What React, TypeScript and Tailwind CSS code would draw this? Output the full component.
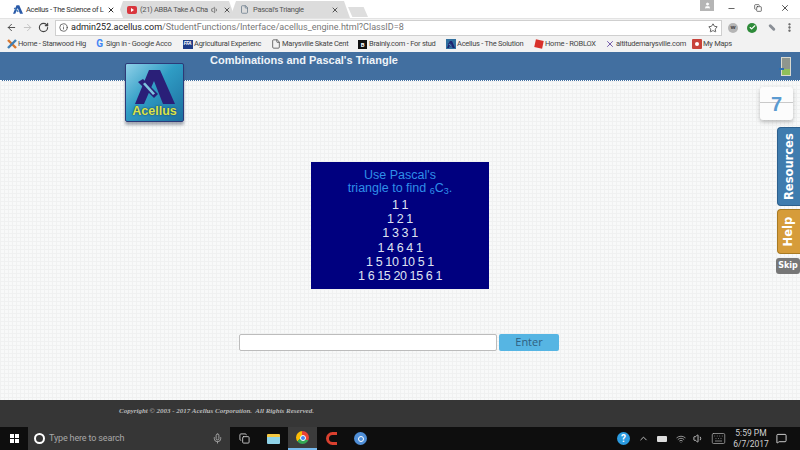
import {
  ArrowLeft,
  ArrowRight,
  RotateCw,
  Info,
  Star,
  X,
  Minus,
  Copy,
  MoreVertical,
  Check,
  Mic,
  ChevronUp,
  Wifi,
  Volume1,
  Keyboard,
  MessageSquare,
  File,
  User,
} from "lucide-react";

const chromeFont = "font-['Roboto','Noto_Sans',sans-serif]";

function AcellusMark({ className }: { className: string }) {
  return (
    <svg viewBox="0 0 40 34" className={className} fill="currentColor">
      <path d="M14 0h11l15 34H28L19 11 9 34H0z" />
      <path d="M3 12l5-3 15 15-4 4z" />
      <path d="M8 14l2-1.5 10 11-2 1.5z" fill="#7fc4de" />
    </svg>
  );
}

function Tab({
  className,
  active,
  children,
}: {
  className: string;
  active?: boolean;
  children: React.ReactNode;
}) {
  return (
    <div
      className={`flex h-[17px] items-center gap-[3px] pl-[10px] pr-[8px] text-[7.5px] tracking-[-0.3px] [clip-path:polygon(0_100%,6px_0,calc(100%-6px)_0,100%_100%)] ${
        active ? "z-10 bg-white text-[#333]" : "bg-[#dcdcdc] text-[#555]"
      } ${className}`}
    >
      {children}
    </div>
  );
}

function TabStrip() {
  return (
    <div className={`flex h-[18px] items-end bg-white pl-[3px] ${chromeFont}`}>
      <Tab active className="w-[120px]">
        <AcellusMark className="h-[9px] w-[10px] shrink-0 text-[#2a5aa8]" />
        <span className="flex-1 whitespace-nowrap">Acellus - The Science of L</span>
        <X size={8} strokeWidth={3} className="shrink-0 text-[#333]" />
      </Tab>
      <Tab className="-ml-[6px] w-[118px]">
        <div className="flex h-[8px] w-[10px] shrink-0 items-center justify-center rounded-[2px] bg-[#d9363e]">
          <div className="h-0 w-0 border-y-[2px] border-l-[3px] border-y-transparent border-l-white" />
        </div>
        <span className="flex-1 whitespace-nowrap">(21) ABBA Take A Cha</span>
        <Volume1 size={8} className="shrink-0" />
        <X size={8} strokeWidth={3} className="ml-[1px] shrink-0" />
      </Tab>
      <Tab className="-ml-[5px] w-[120px]">
        <File size={9} className="shrink-0 text-[#66788a]" />
        <span className="ml-[1px] flex-1 whitespace-nowrap">Pascal's Triangle</span>
        <X size={8} strokeWidth={3} className="mr-[3px] shrink-0" />
      </Tab>
      <div className="mb-[1px] ml-[-2px] h-[10px] w-[20px] bg-[#dedede] [clip-path:polygon(0_0,78%_0,100%_100%,22%_100%)]" />
      <div className="flex-1" />
      <div className="mr-[11px] flex h-[11px] w-[14px] items-center justify-center self-start bg-[#b5b5b5]">
        <User size={7} className="fill-white text-white" />
      </div>
      <div className="flex h-full w-[75px] items-center justify-between pb-[2px] pl-[2px] pr-[10px] text-[#333]">
        <Minus size={9} />
        <Copy size={8} />
        <X size={10} />
      </div>
    </div>
  );
}

function Toolbar() {
  return (
    <div className="flex h-[18px] items-center border-t border-[#e3e3e3] bg-[#f2f2f2] pl-[6px]">
      <ArrowLeft size={11} className="shrink-0 text-[#444]" />
      <ArrowRight size={11} className="ml-[5px] shrink-0 text-[#c0c0c0]" />
      <RotateCw size={11} strokeWidth={2.5} className="ml-[5px] shrink-0 text-[#444]" />
      <div className={`ml-[6px] flex h-[16px] w-[667px] shrink-0 items-center border border-[#cfcfcf] bg-white pl-[3px] pr-[3px] text-[9px] ${chromeFont}`}>
        <Info size={9} className="text-[#444]" />
        <span className="ml-[3px] text-[#222]">admin252.acellus.com</span>
        <span className="text-[#777]">/StudentFunctions/Interface/acellus_engine.html?ClassID=8</span>
        <Star size={10} className="ml-auto text-[#444]" />
      </div>
      <div className="ml-[6px] flex h-[10px] w-[10px] shrink-0 items-center justify-center rounded-full bg-[#b5b5b5] text-[6px] font-bold text-[#444]">
        w
      </div>
      <div className="ml-[9px] flex h-[10px] w-[10px] shrink-0 items-center justify-center rounded-full bg-[#2e8b3a]">
        <Check size={7} strokeWidth={4} className="text-white" />
      </div>
      <div className="ml-[11px] h-[3px] w-[8px] shrink-0 rotate-45 rounded-full bg-[#8a8f96]" />
      <MoreVertical size={11} strokeWidth={3} className="ml-[8px] shrink-0 text-[#555]" />
    </div>
  );
}

const bookmarks = [
  {
    label: "Home - Stanwood Hig",
    box: "w-[88px]",
    icon: (
      <svg viewBox="0 0 10 10" className="h-[10px] w-[10px]">
        <path d="M1 1l8 8" stroke="#d9772e" strokeWidth="2.4" />
        <path d="M9 1L1 9" stroke="#3f7fb5" strokeWidth="2.4" />
      </svg>
    ),
  },
  { label: "Sign in - Google Acco", box: "w-[88px]", icon: <span className="text-[10px] font-bold leading-none text-[#4285f4]">G</span> },
  { label: "Agricultural Experienc", box: "w-[88px]", icon: <div className="flex h-[9px] w-[10px] items-center justify-center bg-[#1f3c88] text-[5px] font-bold italic text-white">FFA</div> },
  { label: "Marysville Skate Cent", box: "w-[87px]", icon: <File size={10} className="text-[#555]" /> },
  { label: "Brainly.com - For stud", box: "w-[88px]", icon: <div className="flex h-[9px] w-[9px] items-center justify-center bg-[#111] text-[6px] font-bold text-white">B</div> },
  { label: "Acellus - The Solution", box: "w-[88px]", icon: <div className="flex h-[10px] w-[10px] items-center justify-center bg-[#2f6f9f]"><AcellusMark className="h-[7px] w-[8px] text-[#1d2570]" /></div> },
  { label: "Home - ROBLOX", box: "w-[71px]", icon: <div className="h-[8px] w-[8px] rotate-12 bg-[#d8302a]" /> },
  { label: "altitudemarysville.com", box: "w-[87px]", icon: <X size={10} className="text-[#5b3f9e]" /> },
  { label: "My Maps", box: "w-[60px]", icon: <div className="flex h-[10px] w-[10px] items-center justify-center rounded-[1px] bg-[#c8423a]"><div className="h-[4px] w-[4px] rounded-full bg-white" /></div> },
];

function Bookmarks() {
  return (
    <div className={`flex h-[16px] items-center bg-[#f2f2f2] pl-[6px] text-[7.5px] tracking-[-0.25px] text-[#444] ${chromeFont}`}>
      {bookmarks.map((b) => (
        <div key={b.label} className={`flex shrink-0 items-center gap-[1px] ${b.box}`}>
          <div className="flex w-[11px] shrink-0 items-center justify-center">{b.icon}</div>
          <span className="flex-1 whitespace-nowrap">{b.label}</span>
        </div>
      ))}
    </div>
  );
}

function PageHeader() {
  return (
    <div className="relative h-[29px] border-b border-dotted border-white bg-[#426fa0] pl-[210px]">
      <h1 className="mt-[1px] font-['Liberation_Sans',sans-serif] text-[11px] font-bold leading-[14px] text-[#eef3f8]">
        Combinations and Pascal's Triangle
      </h1>
      <div className="absolute right-[9px] top-[5px] flex h-[19px] w-[10px] flex-col justify-end border border-[#d9d9cf] bg-[#8f968e]">
        <div className="h-[6px] bg-[#8fc05a]" />
        <div className="absolute -left-[3px] top-[10px] h-[2px] w-[5px] bg-[#2f6fb0]" />
      </div>
    </div>
  );
}

function Logo() {
  return (
    <div className="absolute left-[125px] top-[63px] flex h-[59px] w-[59px] flex-col items-center justify-between rounded-[2px] border border-[#2c3a78] bg-[linear-gradient(135deg,#8ed0e8,#2f9cc4_45%,#1d6f9f)] pb-[3px] pt-[6px] shadow-[0_3px_3px_rgba(60,70,90,0.45)]">
      <AcellusMark className="h-[34px] w-[40px] text-[#2a1f78]" />
      <span className="font-['Liberation_Sans',sans-serif] text-[12.5px] font-bold leading-[13px] text-[#d9e54a] [text-shadow:0_0_2px_#1d2a55]">
        Acellus
      </span>
    </div>
  );
}

function SideTabs() {
  return (
    <>
      <div className="absolute left-[760px] top-[87px] flex h-[33px] w-[33px] items-center justify-center rounded-[3px] bg-[#fcfcfc] shadow-[0_2px_4px_rgba(0,0,0,0.25)]">
        <div className="absolute inset-x-0 top-[15px] h-px bg-[#c9c9c9]" />
        <span className="relative font-['Liberation_Sans',sans-serif] text-[20px] font-bold leading-none text-[#5b9bd1]">7</span>
      </div>
      <div className="absolute left-[777px] top-[127px] flex h-[79px] w-[23px] items-center justify-center rounded-l-[4px] border border-r-0 border-[#2c5f8d] bg-[#3f7cae]">
        <span className="-rotate-90 whitespace-nowrap font-['DejaVu_Sans',sans-serif] text-[11.5px] font-bold text-white">Resources</span>
      </div>
      <div className="absolute left-[777px] top-[209px] flex h-[45px] w-[23px] items-center justify-center rounded-l-[4px] border border-r-0 border-[#a87a22] bg-[#d69c3a]">
        <span className="-rotate-90 whitespace-nowrap font-['DejaVu_Sans',sans-serif] text-[11.5px] font-bold text-white">Help</span>
      </div>
      <div className="absolute left-[776px] top-[258px] flex h-[16px] w-[24px] items-center justify-center rounded-[3px] bg-[#777]">
        <span className="font-['DejaVu_Sans',sans-serif] text-[8px] font-bold text-white">Skip</span>
      </div>
    </>
  );
}

function Question() {
  const rows = ["1 1", "1 2 1", "1 3 3 1", "1 4 6 4 1", "1 5 10 10 5 1", "1 6 15 20 15 6 1"];
  return (
    <div className="flex h-[127px] w-[178px] flex-col items-center bg-[#00007f] pt-[7px] font-['Liberation_Sans',sans-serif]">
      <div className="text-center text-[12.5px] leading-[13px] text-[#2f8fe8]">
        <div>Use Pascal's</div>
        <div>
          triangle to find <sub className="text-[9px]">6</sub>C<sub className="text-[9px]">3</sub>.
        </div>
      </div>
      <div className="mt-[3px] text-center text-[12.5px] leading-[14.2px] tracking-[-0.4px] text-[#dfe3f2]">
        {rows.map((row) => (
          <div key={row}>{row}</div>
        ))}
      </div>
    </div>
  );
}

function TaskIcon({ active, children }: { active?: boolean; children: React.ReactNode }) {
  return (
    <div className={`flex h-full w-[29px] shrink-0 items-center justify-center ${active ? "border-b-2 border-[#76b9ed] bg-[#3c3c3c]" : ""}`}>
      {children}
    </div>
  );
}

function Taskbar() {
  return (
    <div className={`flex h-[23px] items-center bg-[#0e0e0e] text-[#ddd] ${chromeFont}`}>
      <div className="flex h-full w-[28px] shrink-0 items-center justify-center">
        <div className="grid grid-cols-2 gap-[1px]">
          <div className="h-[4px] w-[4px] bg-white" />
          <div className="h-[4px] w-[4px] bg-white" />
          <div className="h-[4px] w-[4px] bg-white" />
          <div className="h-[4px] w-[4px] bg-white" />
        </div>
      </div>
      <div className="flex h-full w-[202px] shrink-0 items-center bg-[#363636] pl-[6px] pr-[7px] text-[9px] tracking-[-0.15px] text-[#a8a8a8]">
        <div className="h-[11px] w-[11px] rounded-full border-2 border-white" />
        <span className="ml-[4px]">Type here to search</span>
        <Mic size={11} className="ml-auto text-[#aaa]" />
      </div>
      <div className="flex h-full items-center">
        <TaskIcon>
          <Copy size={11} className="text-[#ccc]" />
        </TaskIcon>
        <TaskIcon>
          <div className="h-[10px] w-[13px] rounded-[1px] border-t-[3px] border-[#f5c842] bg-[#8fd3e8]" />
        </TaskIcon>
        <TaskIcon active>
          <div className="flex h-[13px] w-[13px] items-center justify-center rounded-full bg-[conic-gradient(#ea4335_0_33%,#34a853_33%_66%,#fbbc05_66%)]">
            <div className="h-[6px] w-[6px] rounded-full border border-white bg-[#4285f4]" />
          </div>
        </TaskIcon>
        <TaskIcon>
          <div className="h-[13px] w-[11px] rounded-l-full border-[3px] border-r-0 border-[#d9402f]" />
        </TaskIcon>
        <TaskIcon>
          <div className="flex h-[13px] w-[13px] items-center justify-center rounded-full bg-[#4f8fd8]">
            <div className="h-[6px] w-[6px] rounded-full border border-white" />
          </div>
        </TaskIcon>
      </div>
      <div className="ml-auto flex h-full items-center">
        <div className="flex h-[13px] w-[13px] items-center justify-center rounded-full bg-[#2b9be0] text-[10px] font-bold text-white">?</div>
        <ChevronUp size={11} className="ml-[8px] text-[#ccc]" />
        <div className="ml-[8px] h-[6px] w-[10px] rounded-[1px] bg-[#ddd]" />
        <Wifi size={10} className="ml-[9px] text-[#aaa]" />
        <Volume1 size={11} className="ml-[7px] text-[#ccc]" />
        <Keyboard size={15} strokeWidth={1.2} className="ml-[7px] text-[#aaa]" />
        <div className="ml-[7px] w-[36px] text-center text-[8.5px] leading-[11px] text-[#d0d0d0]">
          <div>5:59 PM</div>
          <div>6/7/2017</div>
        </div>
        <MessageSquare size={11} className="ml-[7px] mr-[13px] text-[#ddd]" />
      </div>
    </div>
  );
}

export default function App() {
  return (
    <div className="relative flex h-[450px] w-[800px] flex-col overflow-hidden bg-white">
      <TabStrip />
      <Toolbar />
      <Bookmarks />
      <PageHeader />
      <main className="flex h-[319px] flex-col items-center gap-[45px] bg-[#f8f9f9] bg-[linear-gradient(#f0f1f1_1px,transparent_1px),linear-gradient(90deg,#f0f1f1_1px,transparent_1px)] bg-[size:4px_4px] pt-[81px]">
        <Question />
        <div className="flex h-[17px] gap-[2px] pr-[2px]">
          <input className="h-full w-[258px] rounded-[2px] border border-[#bcbcbc] bg-white" />
          <button className="h-full w-[60px] rounded-[2px] bg-[#56b5e3] font-['Open_Sans',sans-serif] text-[11px] text-[#2f5f80]">Enter</button>
        </div>
      </main>
      <footer className="flex h-[27px] items-center justify-start bg-[#363636] pb-[4px] pl-[119px]">
        <span className="font-['Liberation_Serif',serif] text-[7px] font-bold italic text-[#b8b8b8]">
          Copyright © 2003 - 2017 Acellus Corporation.&nbsp; All Rights Reserved.
        </span>
      </footer>
      <Taskbar />
      <Logo />
      <SideTabs />
    </div>
  );
}
